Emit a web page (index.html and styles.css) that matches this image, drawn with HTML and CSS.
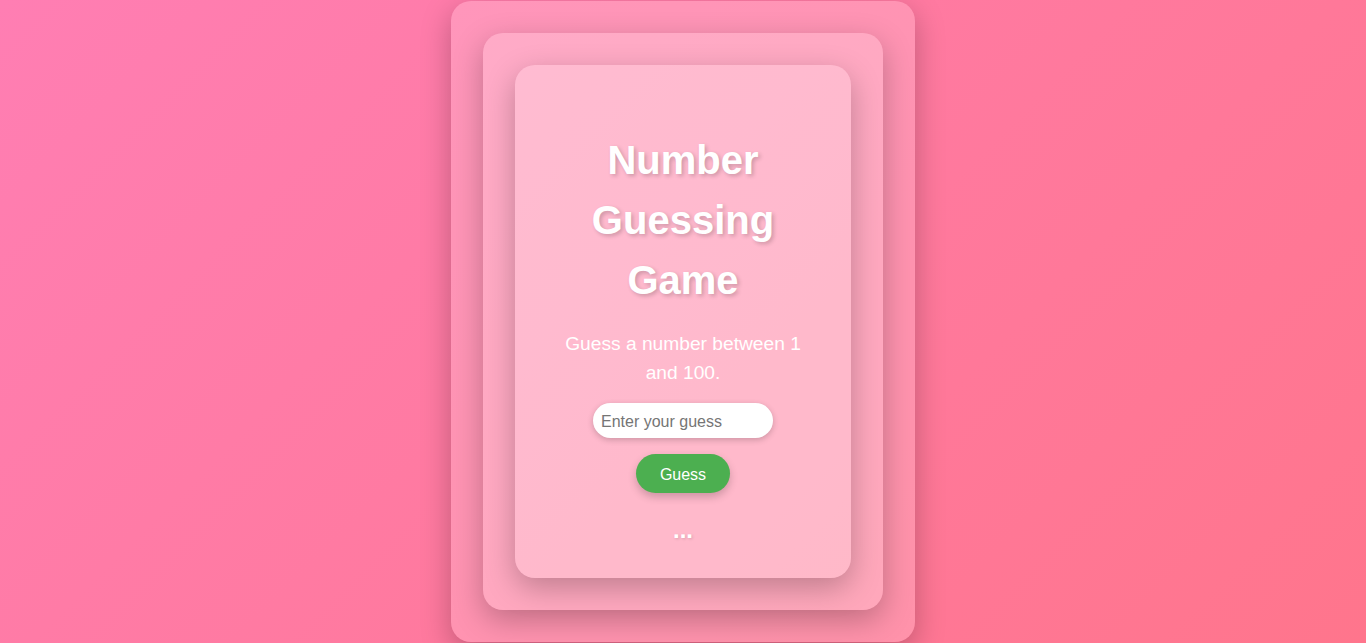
FILE: index.html
```html
<!DOCTYPE html>
<html lang="en">
<head>
<meta charset="UTF-8">
<title>Number Guessing Game</title>
<link rel="stylesheet" href="styles.css">
</head>
<body>
  <div class="layer layer-outer">
    <div class="layer layer-middle">
      <div class="layer card">
        <h1 class="title">Number Guessing Game</h1>
        <p class="intro">Guess a number between 1 and 100.</p>
        <input class="guess-input" type="number" placeholder="Enter your guess">
        <button class="guess-btn" type="button">Guess</button>
        <p class="result">...</p>
      </div>
    </div>
  </div>
</body>
</html>
```
FILE: styles.css
```css
html, body {
  margin: 0;
  padding: 0;
}
body {
  height: 100vh;
  display: flex;
  justify-content: center;
  align-items: center;
  background: linear-gradient(135deg, #ff7eb3, #ff758c);
  font-family: "Liberation Sans", Arial, sans-serif;
  color: #fff;
  overflow: hidden;
}
.layer {
  background: rgba(255, 255, 255, 0.2);
  border-radius: 20px;
  box-shadow: 0 10px 30px rgba(0, 0, 0, 0.25);
  padding: 32px;
}
.layer-outer, .layer-middle {
  display: flex;
}
.card {
  width: 240px;
  padding: 40px 48px 30px;
  text-align: center;
}
.title {
  margin: 25px 0 20px;
  font-size: 40px;
  line-height: 60px;
  font-weight: bold;
  text-shadow: 2px 2px 4px rgba(0, 0, 0, 0.2);
}
.intro {
  margin: 0 0 15px;
  font-size: 19.2px;
  line-height: 28.8px;
}
.guess-input {
  display: block;
  box-sizing: border-box;
  width: 180px;
  height: 35px;
  margin: 0 auto 16px;
  padding: 3px 8px 0;
  border: none;
  border-radius: 20px;
  background: #fff;
  font-family: "Liberation Sans", Arial, sans-serif;
  font-size: 16px;
  color: #333;
  outline: none;
  box-shadow: 0 2px 6px rgba(0, 0, 0, 0.2);
  -moz-appearance: textfield;
}
.guess-input::-webkit-outer-spin-button,
.guess-input::-webkit-inner-spin-button {
  -webkit-appearance: none;
  margin: 0;
}
.guess-input::placeholder {
  color: #757575;
}
.guess-btn {
  display: block;
  box-sizing: border-box;
  width: 94px;
  height: 39px;
  margin: 0 auto;
  padding: 3px 0 0;
  border: none;
  border-radius: 20px;
  background: #4caf50;
  color: #fff;
  font-family: "Liberation Sans", Arial, sans-serif;
  font-size: 16px;
  cursor: pointer;
  box-shadow: 0 4px 8px rgba(0, 0, 0, 0.2);
}
.result {
  margin: 19px 0 0;
  font-size: 24px;
  line-height: 36px;
  font-weight: bold;
  text-shadow: 1px 1px 3px rgba(0, 0, 0, 0.15);
}
```
